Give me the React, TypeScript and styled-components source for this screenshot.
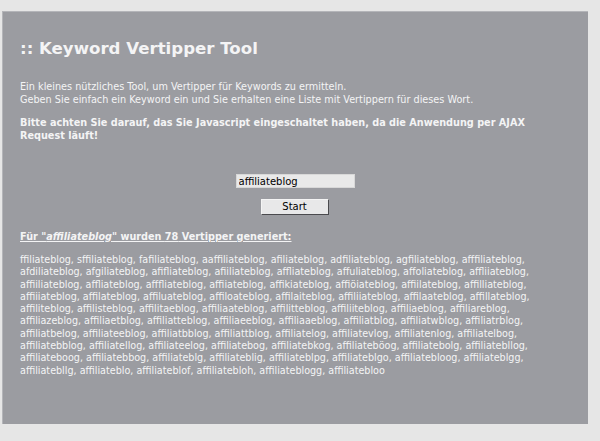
import React, { useState } from 'react';
import styled, { createGlobalStyle } from 'styled-components';

const GlobalStyle = createGlobalStyle`
  html, body {
    margin: 0;
    padding: 0;
    background: #e6e6e6;
  }
`;

const Panel = styled.div`
  box-sizing: border-box;
  width: 586px;
  height: 413px;
  margin: 11px 0 0 2px;
  padding: 27px 20px 0 17px;
  background: #9b9ca1;
  border-left: 1px solid #b4b5b9;
  border-top: 1px solid #b4b5b9;
  color: #f4f4f5;
  font-family: 'DejaVu Sans', Verdana, sans-serif;
  font-size: 9.7px;
`;

const Title = styled.h1`
  margin: 0 0 22px;
  font-size: 16.6px;
  line-height: 20px;
  font-weight: bold;
`;

const Text = styled.p<{ $bold?: boolean }>`
  margin: 0 0 11px;
  line-height: 12.5px;
  font-weight: ${(p) => (p.$bold ? 'bold' : 'normal')};
`;

const Form = styled.form`
  display: flex;
  flex-direction: column;
  align-items: center;
  gap: 11px;
  margin-top: 32px;
`;

const Input = styled.input`
  box-sizing: border-box;
  width: 119px;
  height: 14px;
  margin-left: 2px;
  padding: 0 2px;
  border: 1px solid #d8d8d8;
  background: #e9e9e9;
  color: #000;
  font-family: 'DejaVu Sans', Verdana, sans-serif;
  font-size: 10px;
  outline: none;
`;

const Button = styled.button`
  box-sizing: border-box;
  width: 68px;
  height: 16px;
  margin-left: 1px;
  padding: 0;
  border: 1px solid;
  border-color: #f4f4f4 #4a4a4e #4a4a4e #f4f4f4;
  background: #e8e8e9;
  color: #000;
  font-family: 'DejaVu Sans', Verdana, sans-serif;
  font-size: 10px;
  line-height: 14px;
`;

const ResultHead = styled.div`
  margin-top: 16px;
  font-weight: bold;
  text-decoration: underline;
  line-height: 12px;
`;

const List = styled.p`
  margin: 11px 0 0;
  font-size: 9.6px;
  line-height: 12.3px;
  max-width: 548px;
`;

const typos = [
  'ffiliateblog', 'sffiliateblog', 'fafiliateblog', 'aaffiliateblog', 'afiliateblog', 'adfiliateblog', 'agfiliateblog', 'afffiliateblog',
  'afdiliateblog', 'afgiliateblog', 'afifliateblog', 'afiiliateblog', 'affliateblog', 'affuliateblog', 'affoliateblog', 'affliiateblog',
  'affiiliateblog', 'affliateblog', 'afffliateblog', 'affiiateblog', 'affikiateblog', 'affiöiateblog', 'affiilateblog', 'affilliateblog',
  'affiiiateblog', 'affilateblog', 'affiluateblog', 'affiloateblog', 'affilaiteblog', 'affiliiateblog', 'affilaateblog', 'affillateblog',
  'affiliteblog', 'affilisteblog', 'affilitaeblog', 'affiliaateblog', 'affilitteblog', 'affiliiteblog', 'affiliaeblog', 'affiliareblog',
  'affiliazeblog', 'affiliaetblog', 'affiliatteblog', 'affiliaeeblog', 'affiliaaeblog', 'affiliatblog', 'affiliatwblog', 'affiliatrblog',
  'affiliatbelog', 'affiliateeblog', 'affiliatbblog', 'affiliattblog', 'affiliatelog', 'affiliatevlog', 'affiliatenlog', 'affiliatelbog',
  'affiliatebblog', 'affiliatellog', 'affiliateelog', 'affiliatebog', 'affiliatebkog', 'affiliateböog', 'affiliatebolg', 'affiliatebllog',
  'affiliateboog', 'affiliatebbog', 'affiliateblg', 'affiliateblig', 'affiliateblpg', 'affiliateblgo', 'affiliatebloog', 'affiliateblgg',
  'affiliatebllg', 'affiliateblo', 'affiliateblof', 'affiliatebloh', 'affiliateblogg', 'affiliatebloo',
];

const App: React.FC = () => {
  const [keyword, setKeyword] = useState<string>('affiliateblog');

  return (
    <>
      <GlobalStyle />
      <Panel>
        <Title>:: Keyword Vertipper Tool</Title>
        <Text>
          Ein kleines nützliches Tool, um Vertipper für Keywords zu ermitteln.
          <br />
          Geben Sie einfach ein Keyword ein und Sie erhalten eine Liste mit Vertippern für dieses Wort.
        </Text>
        <Text $bold>
          Bitte achten Sie darauf, das Sie Javascript eingeschaltet haben, da die Anwendung per AJAX Request läuft!
        </Text>
        <Form onSubmit={(e) => e.preventDefault()}>
          <Input value={keyword} onChange={(e) => setKeyword(e.target.value)} />
          <Button type="submit">Start</Button>
        </Form>
        <ResultHead>
          Für "<i>affiliateblog</i>" wurden {typos.length} Vertipper generiert:
        </ResultHead>
        <List>{typos.join(', ')}</List>
      </Panel>
    </>
  );
};

export default App;
